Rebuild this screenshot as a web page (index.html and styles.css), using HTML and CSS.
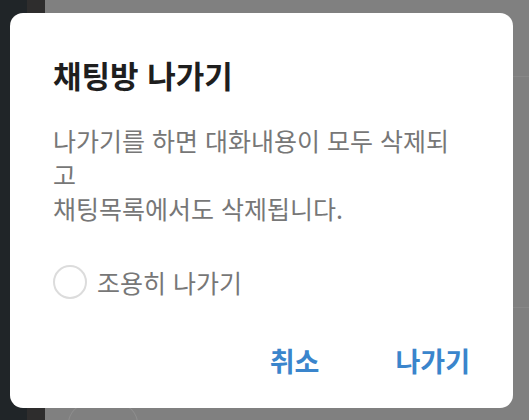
FILE: index.html
```html
<!DOCTYPE html>
<html lang="ko">
<head>
  <meta charset="UTF-8" />
  <meta name="viewport" content="width=device-width, initial-scale=1.0"/>
  <title>채팅방 나가기</title>
  <link rel="stylesheet" href="styles.css">
</head>
<body>
  <div class="screen">
    <div class="side"></div>
    <div class="side-edge"></div>
    <div class="list">
      <div class="row"></div>
      <div class="row"></div>
      <div class="row last"><span class="avatar"></span></div>
    </div>
  </div>

  <div class="dialog">
    <h1 class="title">채팅방 나가기</h1>
    <p class="message">나가기를 하면 대화내용이 모두 삭제되<br>고<br>채팅목록에서도 삭제됩니다.</p>
    <label class="option">
      <span class="radio"></span>
      <span class="option-text">조용히 나가기</span>
    </label>
    <div class="actions">
      <button class="btn">취소</button>
      <button class="btn">나가기</button>
    </div>
  </div>
</body>
</html>
```

FILE: styles.css
```css
html, body {
  overflow: hidden;
}

body {
  margin: 0;
  width: 529px;
  height: 420px;
  font-family: "Noto Sans CJK KR", "Noto Sans", sans-serif;
  background: #808080;
  position: relative;
}

/* dimmed page behind the dialog */
.screen {
  display: flex;
  height: 420px;
}

.side {
  width: 27px;
  background: #202528;
}

.side-edge {
  width: 18px;
  background: #2e2d2d;
}

.list {
  flex: 1;
  display: flex;
  flex-direction: column;
}

.row {
  height: 76px;
  border-bottom: 1px solid #888888;
}

.row:nth-child(2) {
  height: 230px;
}

.row.last {
  border-bottom: none;
  flex: 1;
  position: relative;
  overflow: hidden;
}

.avatar {
  position: absolute;
  left: 23px;
  top: 95px;
  width: 68px;
  height: 20px;
  border-radius: 34px 34px 0 0;
  border: 1px solid #8e8e8e;
  border-bottom: none;
}

/* dialog */
.dialog {
  position: absolute;
  left: 10px;
  top: 13px;
  width: 503px;
  height: 395px;
  box-sizing: border-box;
  background: #fff;
  border-radius: 13px;
  padding: 42px 43px 0 43px;
}

.title {
  margin: 0;
  font-size: 31px;
  font-weight: 700;
  color: #1e1e1e;
  line-height: 40px;
}

.message {
  margin: 28px 0 0;
  font-size: 25px;
  line-height: 34px;
  color: #777777;
}

.option {
  display: flex;
  align-items: center;
  gap: 10px;
  margin-top: 40px;
}

.radio {
  width: 30px;
  height: 30px;
  border: 2px solid #dcdcdc;
  border-radius: 50%;
}

.option-text {
  font-size: 25px;
  line-height: 34px;
  color: #777777;
}

.actions {
  display: flex;
  justify-content: flex-end;
  gap: 76px;
  margin-top: 42px;
}

.btn {
  border: none;
  background: none;
  padding: 0;
  font-family: inherit;
  font-size: 27px;
  line-height: 39px;
  font-weight: 700;
  color: #3a85cc;
}
```
